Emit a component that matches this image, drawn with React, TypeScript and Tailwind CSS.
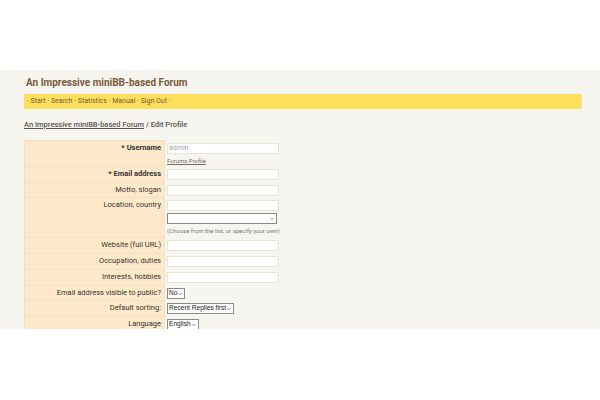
import { ChevronDown } from "lucide-react"

const font = { fontFamily: "Roboto, 'Liberation Sans', sans-serif" }

function TextInput({ value, muted }: { value?: string; muted?: boolean }) {
  return (
    <div
      className={`w-[112px] h-[11px] bg-white border border-[#e3e8cf] text-[7px] leading-[9px] px-[1px] ${
        muted ? "text-[#9aa0b0]" : "text-[#333]"
      }`}
    >
      {value}
    </div>
  )
}

function Select({ label, width }: { label: string; width?: string }) {
  return (
    <div
      className={`${width ?? "w-fit"} h-[11px] bg-white border border-[#8a8a8a] flex items-center justify-between pl-[1px] pr-[1px] text-[6.6px] leading-none text-[#222] whitespace-nowrap font-['Liberation_Sans',Arial,sans-serif]`}
    >
      <span>{label}</span>
      <ChevronDown className="w-[6px] h-[6px] shrink-0 text-[#555]" strokeWidth={2.5} />
    </div>
  )
}

function Row({
  label,
  bold,
  h,
  children,
}: {
  label: string
  bold?: boolean
  h: string
  children: React.ReactNode
}) {
  return (
    <div className={`flex ${h}`}>
      <div
        className={`w-[140px] shrink-0 bg-[#fde9c9] border-r border-b border-[#e9e6bf] text-right pr-[3px] pt-[2px] text-[7.5px] leading-[10px] text-[#333] ${
          bold ? "font-bold" : ""
        }`}
      >
        {label}
      </div>
      <div className="pl-[2px] pt-[2px] flex flex-col">{children}</div>
    </div>
  )
}

export default function App() {
  return (
    <div className="w-[600px] h-[400px] bg-white" style={font}>
      <div className="h-[70px]" />
      <div className="h-[259px] bg-[#f6f5f0] overflow-hidden px-[24px] pt-[6px]">
        <div className="pl-[2px] text-[10px] font-bold text-[#7a5a3c] leading-[14px]">
          An Impressive miniBB-based Forum
        </div>
        <div className="mt-[4px] w-[558px] h-[15px] bg-[#fce05b] border-r border-[#efe3a8] pl-[3px] text-[7px] leading-[15px] text-[#7a5a3c]">
          · Start · Search · Statistics · Manual · Sign Out ·
        </div>
        <div className="mt-[11px] text-[7.5px] leading-[10px] font-medium text-[#5b5450]">
          <span className="underline">An Impressive miniBB-based Forum</span> / Edit Profile
        </div>
        <div className="mt-[10px] w-[558px] border-l border-[#e9e6bf]">
          <div className="w-[141px] border-t border-[#e9e6bf]" />
          <Row label="* Username" bold h="h-[26px]">
            <TextInput value="admin" muted />
            <span className="mt-[3px] text-[6px] leading-[8px] text-[#7a6a66] underline">
              Forums Profile
            </span>
          </Row>
          <Row label="* Email address" bold h="h-[16px]">
            <TextInput />
          </Row>
          <Row label="Motto, slogan" h="h-[15px]">
            <TextInput />
          </Row>
          <Row label="Location, country" h="h-[40px]">
            <TextInput />
            <div className="mt-[2px]">
              <Select label="" width="w-[110px]" />
            </div>
            <span className="mt-[3px] text-[6px] leading-[8px] text-[#777]">
              (Choose from the list, or specify your own)
            </span>
          </Row>
          <Row label="Website (full URL)" h="h-[16px]">
            <TextInput />
          </Row>
          <Row label="Occupation, duties" h="h-[16px]">
            <TextInput />
          </Row>
          <Row label="Interests, hobbies" h="h-[16px]">
            <TextInput />
          </Row>
          <Row label="Email address visible to public?" h="h-[15px]">
            <Select label="No" />
          </Row>
          <Row label="Default sorting:" h="h-[16px]">
            <Select label="Recent Replies first" />
          </Row>
          <Row label="Language" h="h-[16px]">
            <Select label="English" />
          </Row>
        </div>
      </div>
    </div>
  )
}
